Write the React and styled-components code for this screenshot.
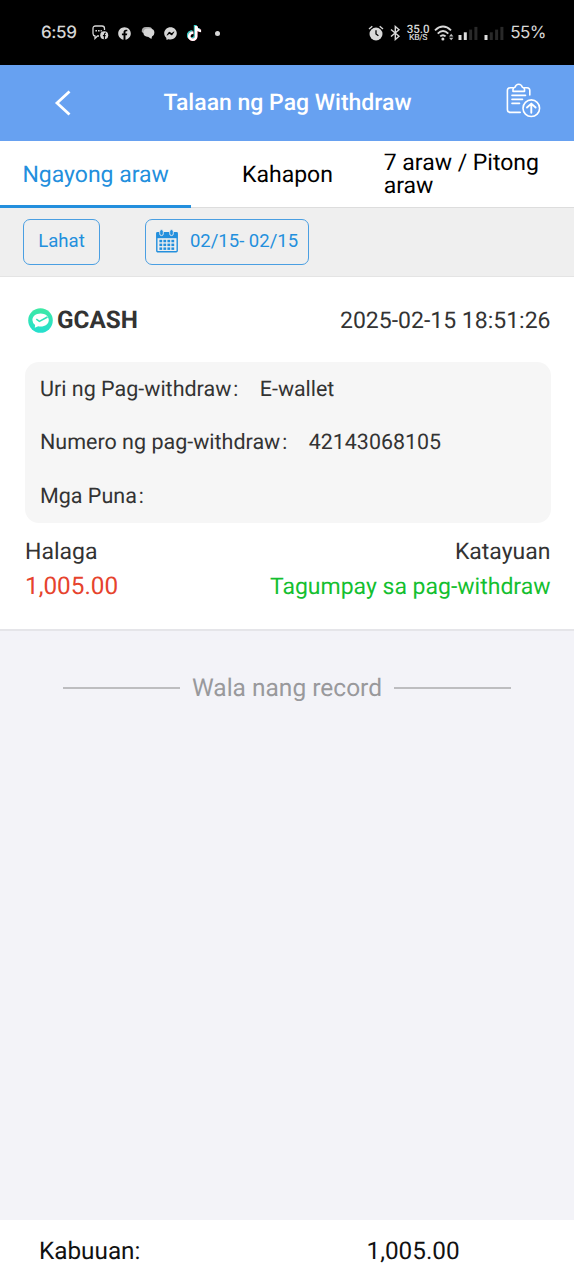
import React from "react";
import styled, { createGlobalStyle } from "styled-components";
import { FaFacebook, FaFacebookMessenger, FaTiktok } from "react-icons/fa";

const App = () => {
  return (
    <Page>
      <GlobalStyle />
      <StatusBar />
      <Header>
        <BackIcon viewBox="0 0 18 28">
          <path d="M15.5 2.5 L3 14 L15.5 25.5" />
        </BackIcon>
        <Title>Talaan ng Pag Withdraw</Title>
        <ClipboardIcon />
      </Header>
      <Tabs>
        <Tab $active>
          <Label $size={23}>Ngayong araw</Label>
        </Tab>
        <Tab>
          <Label $size={23}>Kahapon</Label>
        </Tab>
        <Tab>
          <Label $size={23}>7 araw / Pitong araw</Label>
        </Tab>
      </Tabs>
      <FilterBar>
        <FilterButton $width={77}>
          <Label $size={18.6}>Lahat</Label>
        </FilterButton>
        <FilterButton $width={164}>
          <CalendarIcon />
          <Label $size={18.5}>02/15- 02/15</Label>
        </FilterButton>
      </FilterBar>
      <Record>
        <RecordHead>
          <Wallet>
            <GcashIcon />
            <WalletName>GCASH</WalletName>
          </Wallet>
          <Label $size={23}>2025-02-15 18:51:26</Label>
        </RecordHead>
        <Details>
          <DetailRow name="Uri ng Pag-withdraw" value="E-wallet" />
          <DetailRow name="Numero ng pag-withdraw" value="42143068105" />
          <DetailRow name="Mga Puna" />
        </Details>
        <Summary>
          <Label $size={23}>Halaga</Label>
          <Label $size={23}>Katayuan</Label>
        </Summary>
        <Summary>
          <Amount>1,005.00</Amount>
          <Label $size={23} $color="#14bf30">Tagumpay sa pag-withdraw</Label>
        </Summary>
      </Record>
      <EndOfList>
        <Line />
        <EndText>Wala nang record</EndText>
        <Line />
      </EndOfList>
      <Footer>
        <Label $size={24.3}>Kabuuan:</Label>
        <Label $size={24.3}>1,005.00</Label>
      </Footer>
    </Page>
  );
};

const DetailRow = ({ name, value }) => (
  <Detail>
    <Label $size={21.5}>
      {name}
      <Colon>：</Colon>
    </Label>
    {value && <Label $size={21.4}>{value}</Label>}
  </Detail>
);

const StatusBar = () => (
  <StatusWrap>
    <Clock>6:59</Clock>
    <Notifications>
      <ChatIcon />
      <FaFacebook size={13} />
      <BubbleIcon />
      <FaFacebookMessenger size={13} />
      <TiktokWrap>
        <FaTiktok size={15} />
      </TiktokWrap>
      <Dot />
    </Notifications>
    <System>
      <AlarmIcon />
      <BluetoothIcon />
      <Speed>
        <SpeedValue>35.0</SpeedValue>
        <SpeedUnit>KB/S</SpeedUnit>
      </Speed>
      <WifiIcon />
      <SignalIcon level={2} />
      <SignalIcon level={1} />
      <Battery>55%</Battery>
    </System>
  </StatusWrap>
);

const ChatIcon = () => (
  <svg width="17" height="16" viewBox="0 0 17 16" fill="none" stroke="#d6d6d6">
    <path d="M7 11 H5.5 L3 13.5 V11 Q1 10.5 1 8.5 V3.5 Q1 1 3.5 1 H10 Q12.5 1 12.5 3.5 V5" strokeWidth="1.3" />
    <path d="M3.4 5.8 h1.6 M6 5.8 h1.6 M8.6 5.8 h1.2" strokeWidth="1.6" />
    <circle cx="12.2" cy="10.2" r="4" fill="#d6d6d6" stroke="none" />
    <path d="M12.4 14.2 V9.3 Q12.4 8 14 8 M10.9 10.6 h2.8" stroke="#000" strokeWidth="1.1" />
  </svg>
);

const BubbleIcon = () => (
  <svg width="14" height="14" viewBox="0 0 14 14">
    <path d="M0.8 6 Q0.4 1 5 1 H8 Q10.4 1 11.2 3 L4 8 Z" fill="#a9a9a9" />
    <path d="M6 2.4 H9.3 Q13.4 2.8 13.4 6.8 Q13.4 9.6 11 10.5 L10.4 13 L7.4 11 Q2.4 10.8 2.4 6.8 Q2.4 2.8 6 2.4 Z" fill="#d6d6d6" />
  </svg>
);

const AlarmIcon = () => (
  <svg width="16" height="16" viewBox="0 0 16 16">
    <circle cx="8" cy="9" r="6.5" fill="#d9d9d9" />
    <path d="M1 4 L4.3 1.2 M15 4 L11.7 1.2" stroke="#d9d9d9" strokeWidth="1.4" />
    <path d="M8 5.2 V9 L10.4 10.8" stroke="#000" strokeWidth="1.3" fill="none" />
  </svg>
);

const BluetoothIcon = () => (
  <svg width="11" height="16" viewBox="0 0 11 16" fill="none" stroke="#d9d9d9" strokeWidth="1.4">
    <path d="M1 4.5 L9 11.2 L5.3 14.5 V1.5 L9 4.8 L1 11.5" />
  </svg>
);

const WifiIcon = () => (
  <svg width="21" height="16" viewBox="0 0 21 16" fill="none" stroke="#d9d9d9" strokeWidth="1.9">
    <path d="M1 5.4 Q9 -2.2 17 5.4" />
    <path d="M3.7 8.6 Q9 3.6 14.3 8.6" />
    <path d="M6.2 11.4 Q9 8.9 11.6 11.4" />
    <circle cx="8.9" cy="14" r="1.5" fill="#d9d9d9" stroke="none" />
    <path d="M15 11.4 L17.2 8.8 L19.4 11.4 Z M15 12.7 L17.2 15.2 L19.4 12.7 Z" fill="#bdbdbd" stroke="none" />
  </svg>
);

const SignalIcon = ({ level }) => (
  <svg width="20" height="15" viewBox="0 0 20 15">
    {[0, 1, 2, 3].map((i) => (
      <rect
        key={i}
        x={0.5 + i * 5.3}
        y={9 - i * 2.7}
        width="3"
        height={5 + i * 2.7}
        fill={i < level ? "#dedede" : "#292929"}
      />
    ))}
  </svg>
);

const ClipboardIcon = () => (
  <ClipboardSvg viewBox="0 0 36 36">
    <path d="M14.2 29.4 H4.2 Q1.4 29.4 1.4 26.6 V7.6 Q1.4 4.8 4.2 4.8 H7" />
    <path d="M18.5 4.8 H21 Q23.8 4.8 23.8 7.6 V12" />
    <path d="M7 8.4 V6.2 Q7 4.6 9 4.2 Q10 1.2 12.7 1.2 Q15.3 1.2 16.4 4.2 Q18.5 4.6 18.5 6.2 V8.4 Z" />
    <path d="M6 12.4 H19.5 M6 16.4 H16.5 M6 20.4 H13.5" />
    <circle cx="25.3" cy="25.2" r="8.3" />
    <path d="M25.3 29.8 V21.2 M21 24.5 L25.3 20.6 L29.6 24.5" strokeWidth="1.9" />
  </ClipboardSvg>
);

const CalendarIcon = () => (
  <svg width="22" height="24" viewBox="0 0 22 24">
    <rect x="0.8" y="3.6" width="20.4" height="19.2" rx="1" fill="none" stroke="#238fdd" strokeWidth="1.4" />
    <rect x="0.5" y="3.2" width="21" height="6" fill="#238fdd" />
    {[5.5, 15.5].map((x) => (
      <rect key={x} x={x - 1.8} y="0.6" width="3.6" height="6" rx="1.8" fill="#238fdd" stroke="#eee" strokeWidth="0.9" />
    ))}
    {[10.8, 14.6, 18.4].map((y) =>
      [3.4, 7.4, 11.4, 15.4].map((x) => (
        <rect key={`${x}-${y}`} x={x} y={y} width="2.8" height="2.5" fill="#238fdd" />
      ))
    )}
  </svg>
);

const GcashIcon = () => (
  <svg width="25" height="25" viewBox="0 0 25 25">
    <defs>
      <linearGradient id="gcash" x1="0" y1="0" x2="0" y2="1">
        <stop offset="0" stopColor="#3de9a4" />
        <stop offset="1" stopColor="#25dfcf" />
      </linearGradient>
    </defs>
    <circle cx="12.5" cy="12.5" r="12.3" fill="url(#gcash)" />
    <path d="M12.6 5.5 C17.3 5.5 20.8 8.3 20.8 12 C20.8 15.8 17.3 18.6 12.6 18.6 Q11.3 18.6 10.2 18.3 L6.8 19.7 L7.1 16.9 Q4.4 15 4.4 12 C4.4 8.3 8 5.5 12.6 5.5 Z" fill="#fff" />
    <path d="M8.3 11.2 L11.4 13.4 L19.5 9" fill="none" stroke="#2fe2b8" strokeWidth="1.6" />
  </svg>
);

const GlobalStyle = createGlobalStyle`
  body {
    margin: 0;
    background: #f3f3f8;
    font-family: Roboto, "Noto Sans CJK SC", sans-serif;
    text-rendering: geometricPrecision;
  }
  * {
    box-sizing: border-box;
  }
  svg {
    display: block;
    flex-shrink: 0;
  }
`;

const Page = styled.div`
  display: flex;
  flex-direction: column;
  width: 574px;
  height: 1280px;
  overflow: hidden;
  background: #f3f3f8;
`;

const Label = styled.span`
  font-size: ${({ $size }) => $size}px;
  color: ${({ $color }) => $color || "inherit"};
`;

const StatusWrap = styled.div`
  display: flex;
  align-items: center;
  height: 65px;
  padding: 1px 28px 0 41px;
  background: #000;
  color: #d6d6d6;
  font-family: Inter, sans-serif;
`;

const Clock = styled.div`
  width: 51px;
  font-size: 17px;
  font-weight: 500;
  letter-spacing: -0.4px;
`;

const Notifications = styled.div`
  display: flex;
  align-items: center;
  gap: 9px;

  > :nth-child(3) {
    margin-left: 1px;
  }
`;

const TiktokWrap = styled.span`
  margin-left: 1px;
  color: #fff;
  filter: drop-shadow(0.7px 0.4px 0 #e83b5b) drop-shadow(-0.5px -0.3px 0 #35cfc8);
`;

const Dot = styled.span`
  width: 5px;
  height: 5px;
  margin-left: 4px;
  border-radius: 50%;
  background: #d6d6d6;
`;

const System = styled.div`
  display: flex;
  align-items: center;
  gap: 6px;
  margin-left: auto;

  > :nth-child(5) {
    margin-left: -3px;
  }
`;

const Speed = styled.div`
  width: 24px;
  margin-right: -2px;
  margin-left: -1px;
  font-family: Roboto, sans-serif;
  text-align: center;
  white-space: nowrap;
`;

const SpeedValue = styled.div`
  font-size: 11.6px;
  font-weight: 500;
  line-height: 10px;
`;

const SpeedUnit = styled.div`
  font-size: 8.6px;
  font-weight: 500;
  line-height: 8px;
  letter-spacing: -0.3px;
`;

const Battery = styled.div`
  font-size: 17px;
  letter-spacing: -0.5px;
`;

const Header = styled.header`
  display: flex;
  align-items: center;
  justify-content: space-between;
  height: 76px;
  padding: 0 32px 1px 54px;
  background: #67a1f1;
`;

const BackIcon = styled.svg`
  width: 18px;
  height: 28px;
  fill: none;
  stroke: #fff;
  stroke-width: 2.8px;
`;

const ClipboardSvg = styled.svg`
  width: 36px;
  height: 36px;
  margin-bottom: 4px;
  fill: none;
  stroke: #fff;
  stroke-width: 1.6px;
  stroke-linecap: round;
  stroke-linejoin: round;
`;

const Title = styled.h1`
  margin: 0 3px 0 0;
  color: #fff;
  font-size: 23px;
  font-weight: 500;
`;

const Tabs = styled.nav`
  display: grid;
  grid-template-columns: repeat(3, 1fr);
  height: 67px;
  background: #fff;
  border-bottom: 1px solid #ddd;
`;

const Tab = styled.div`
  display: flex;
  align-items: center;
  justify-content: center;
  height: 67px;
  padding-top: 2px;
  padding-left: ${({ $active }) => ($active ? 0 : 1)}px;
  line-height: 23px;
  color: ${({ $active }) => ($active ? "#238fdd" : "#000")};
  border-bottom: 3px solid ${({ $active }) => ($active ? "#238fdd" : "transparent")};
`;

const FilterBar = styled.div`
  display: flex;
  align-items: center;
  gap: 45px;
  height: 69px;
  padding: 0 0 1px 23px;
  background: #efefef;
  border-bottom: 1px solid #e4e4e4;
`;

const FilterButton = styled.button`
  display: flex;
  align-items: center;
  justify-content: center;
  gap: 12px;
  width: ${({ $width }) => $width}px;
  height: 46px;
  padding: 0 0 1px;
  background: transparent;
  border: 1px solid #4a9fe2;
  border-radius: 7px;
  color: #238fdd;
  font-family: inherit;
`;

const Record = styled.section`
  height: 354px;
  padding: 0 23.5px 0 25px;
  background: #fff;
  border-bottom: 2px solid #e5e5e9;
  color: #333;
`;

const RecordHead = styled.div`
  display: flex;
  align-items: center;
  justify-content: space-between;
  height: 85px;
  padding-top: 1px;
`;

const Wallet = styled.div`
  display: flex;
  align-items: center;
  gap: 4px;
  padding-left: 3px;
`;

const WalletName = styled.strong`
  margin-bottom: 1px;
  font-size: 24.3px;
  font-weight: 700;
`;

const Details = styled.div`
  height: 161px;
  margin-bottom: 11px;
  padding: 1px 0 0 15px;
  border-radius: 14px;
  background: #f6f6f6;
`;

const Detail = styled.div`
  display: flex;
  align-items: center;
  gap: 8px;
  height: 53.5px;
  line-height: 26px;
`;

const Colon = styled.span`
  display: inline-block;
  width: 20.5px;
  font-size: 18px;
  font-weight: 300;
  line-height: 1;
`;

const Summary = styled.div`
  display: flex;
  align-items: center;
  justify-content: space-between;
  height: 35px;
`;

const Amount = styled.span`
  margin-bottom: 2px;
  color: #e6432d;
  font-size: 24.3px;
`;

const EndOfList = styled.div`
  display: flex;
  align-items: center;
  justify-content: center;
  gap: 12px;
  height: 114px;
  color: #99999c;
`;

const EndText = styled.span`
  margin-bottom: 2px;
  font-size: 24.5px;
`;

const Line = styled.span`
  width: 117px;
  height: 2px;
  background: #bdbdc0;
`;

const Footer = styled.footer`
  display: grid;
  grid-template-columns: 327.5px 1fr;
  align-items: center;
  height: 60px;
  margin-top: auto;
  padding-left: 39px;
  background: #fff;
  color: #111;
`;

export default App;
